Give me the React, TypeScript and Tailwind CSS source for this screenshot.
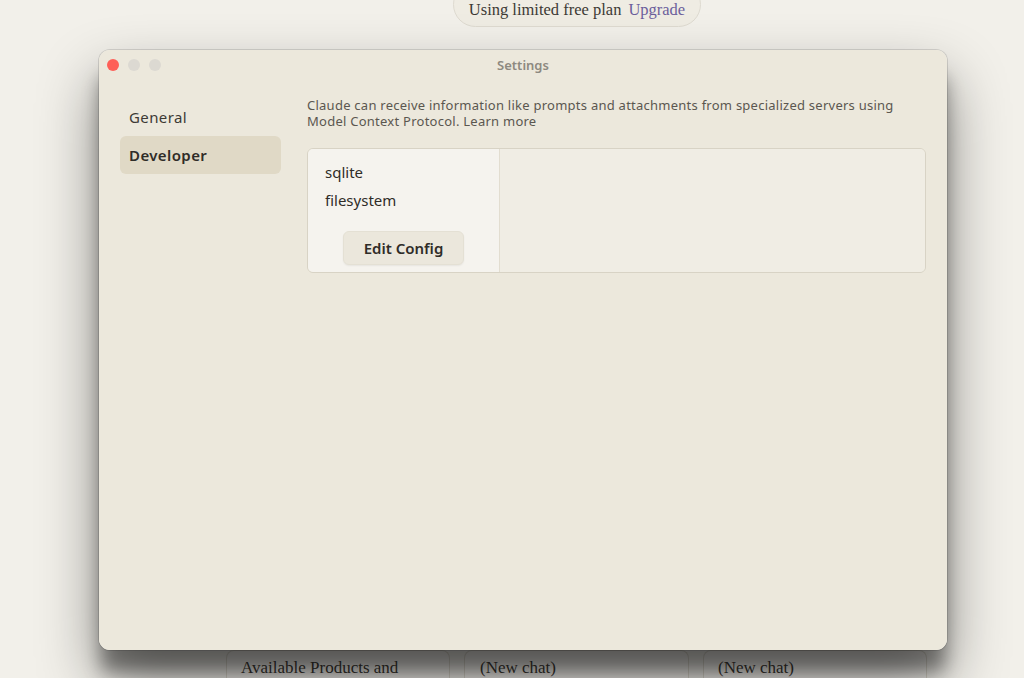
import React from "react";

const sans = { fontFamily: "'Noto Sans', Inter, sans-serif" };
const serif = { fontFamily: "'Liberation Serif', 'DejaVu Serif', serif" };

export default function App() {
  return (
    <div className="relative w-[1024px] h-[678px] overflow-hidden bg-[#f2f0ea]">
      {/* background page */}
      <div className="flex flex-col h-full">
        <div className="flex justify-center -mt-[18px] pl-[130px]">
          <div
            className="flex items-center gap-[7px] h-[45px] pt-[10px] px-[15px] rounded-full border border-[#dedad0] bg-[#efece3] text-[16.5px] leading-[20px] text-[#3d3a35]"
            style={serif}
          >
            <span>Using limited free plan</span>
            <span className="text-[#6c5f9c]">Upgrade</span>
          </div>
        </div>
        <div className="flex-1" />
        <div className="flex gap-[14px] pl-[226px] h-[28px]" style={serif}>
          <div className="w-[224px] border-x border-t border-[#dcd8cd] rounded-t-[8px] pl-[14px] pt-[4px] text-[17px] text-[#3d3a35] bg-[#f3f1ec]">
            Available Products and
          </div>
          <div className="w-[225px] border-x border-t border-[#dcd8cd] rounded-t-[8px] pl-[15px] pt-[4px] text-[17px] text-[#3d3a35] bg-[#f3f1ec]">
            (New chat)
          </div>
          <div className="w-[224px] border-x border-t border-[#dcd8cd] rounded-t-[8px] pl-[14px] pt-[4px] text-[17px] text-[#3d3a35] bg-[#f3f1ec]">
            (New chat)
          </div>
        </div>
      </div>

      {/* window shadow */}
      <div className="absolute left-[99px] top-[50px] w-[848px] h-[600px] rounded-[11px] shadow-[0_30px_60px_rgba(0,0,0,0.45),0_24px_18px_-2px_rgba(0,0,0,0.4),0_0_0_1px_rgba(0,0,0,0.12)]" />

      {/* settings window */}
      <div
        className="absolute left-[99px] top-[50px] w-[848px] h-[600px] rounded-[11px] bg-[#ece8dc] flex flex-col overflow-hidden"
        style={sans}
      >
        <div className="relative h-[30px] flex items-center justify-center">
          <div className="absolute left-[8px] top-[9px] flex gap-[9px]">
            <span className="w-[12px] h-[12px] rounded-full bg-[#fe5f57]" />
            <span className="w-[12px] h-[12px] rounded-full bg-[#dcd9d2]" />
            <span className="w-[12px] h-[12px] rounded-full bg-[#dcd9d2]" />
          </div>
          <span className="text-[13px] font-semibold text-[#8d8980] mt-[1px]">Settings</span>
        </div>
        <div className="flex flex-1">
          <div className="w-[208px] pl-[21px] pr-[26px] pt-[18px] flex flex-col">
            <div className="h-[38px] flex items-center px-[9px] rounded-[6px] text-[15px] text-[#3d3a35] tracking-[0.4px]">
              General
            </div>
            <div className="h-[38px] flex items-center px-[9px] rounded-[6px] bg-[#e0d9c6] text-[15px] font-semibold text-[#2f2c28] tracking-[0.4px]">
              Developer
            </div>
          </div>
          <div className="flex-1 pr-[21px] pt-[17px]">
            <p className="text-[13px] leading-[16px] text-[#5b5750] tracking-[0.25px] max-w-[600px]">
              Claude can receive information like prompts and attachments from specialized servers using Model Context
              Protocol. Learn more
            </p>
            <div className="mt-[19px] h-[125px] flex rounded-[6px] border border-[#d8d3c5] overflow-hidden">
              <div className="w-[192px] bg-[#f5f3ee] border-r border-[#e2ddd0] flex flex-col pl-[17px] pt-[9px]">
                <div className="h-[28px] flex items-center text-[15px] text-[#2f2c28]">sqlite</div>
                <div className="h-[28px] flex items-center text-[15px] text-[#2f2c28]">filesystem</div>
                <div className="mt-[17px] ml-[18px] w-[121px] h-[34px] flex items-center justify-center rounded-[6px] bg-[#ebe7dc] border border-[#e4e0d4] shadow-[0_1px_2px_rgba(0,0,0,0.06)] text-[15px] font-semibold text-[#2f2c28]">
                  Edit Config
                </div>
              </div>
              <div className="flex-1 bg-[#f0ede4]" />
            </div>
          </div>
        </div>
      </div>
    </div>
  );
}
